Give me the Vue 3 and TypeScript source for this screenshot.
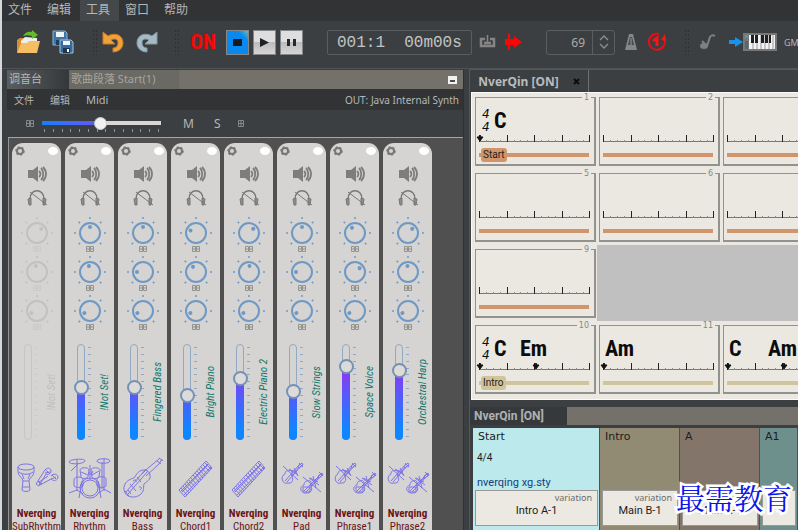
<script setup lang="ts">
import { ref } from 'vue'

interface Channel {
  name: string
  patch: string
  icon: string
  knobs: number[]
  level: number
  off?: boolean
}

interface Chord {
  name: string
  beat: number
}

interface Bar {
  num: number
  chords?: Chord[]
  meter?: boolean
  section?: string
  tone: string
  blank?: boolean
}

const menus = ['文件', '编辑', '工具', '窗口', '帮助']
const tempo = ref('69')
const master = ref(49)

const channels = ref<Channel[]>([
  { name: 'SubRhythm', patch: '!Not Set!', icon: 'djembe', knobs: [45, -10, -110], level: 0, off: true },
  { name: 'Rhythm', patch: '!Not Set!', icon: 'drums', knobs: [0, -10, -110], level: 56 },
  { name: 'Bass', patch: 'Fingered Bass', icon: 'bass', knobs: [0, -90, -110], level: 56 },
  { name: 'Chord1', patch: 'Bright Piano', icon: 'keys', knobs: [-65, -30, -110], level: 46 },
  { name: 'Chord2', patch: 'Electric Piano 2', icon: 'keys', knobs: [45, 5, -110], level: 67 },
  { name: 'Pad', patch: 'Slow Strings', icon: 'strings', knobs: [0, -90, -110], level: 51 },
  { name: 'Phrase1', patch: 'Space Voice', icon: 'strings', knobs: [-30, 50, -110], level: 82 },
  { name: 'Phrase2', patch: 'Orchestral Harp', icon: 'strings', knobs: [45, -5, -110], level: 76 },
])

const knobNames = ['Pan', 'Reverb', 'Chorus']
const knobTicks = [-135, -90, -45, 0, 45, 90, 135]

const icons: Record<string, string[]> = {
  djembe: [
    'M3 10c0-4 16-4 16 0s-16 4-16 0zM3 10v5c0 4 5 6 5 9l-1 9c2 2 6 2 8 0l-1-9c0-3 5-5 5-9v-5M4 15c4 3 10 3 14 0M7 17l2 5M15 17l-2 5M8 24h6M8 30h6',
    'M30 13c2-3 6-2 6 1s-3 4-5 3l-7 12-3-2 7-11zM36 19c2-3 7-2 7 1s-4 5-7 2l-11 6-1-3 9-6M30 16l5-1M36 22l5-2M31 13l4 4M37 18l4 4M23 24l4 3',
  ],
  drums: [
    'M1 5c0-3 17-4 16-1S2 8 1 5zM29 4c0-3 13-3 13 0s-13 3-13 0zM9 2v32M10 7L3 14M36 1v33M34 5v27M9 33l-8 3M9 33l6 4M36 32l-5 4M36 32l7 4',
    'M12 31a10 10 0 1 0 20 0a10 10 0 1 0-20 0zM14 31a8 8 0 1 0 16 0a8 8 0 1 0-16 0zM14 24L11 41M30 24l3 17M6 23c0-4 9-4 9 0v6c-2 2-7 2-9 0zM29 22c0-3 9-3 9 0v7c-2 2-7 2-9 0z',
    'M12 13c0-3 9-3 9 0l-1 7c-2 2-6 2-7 0zM23 13c0-3 9-3 9 0l-1 7c-2 2-6 2-7 0zM21 15l2 3 2-4M22 8v15M13 15l7 3M24 18l7-4',
  ],
  bass: [
    'M41 2l-3 5-13 12M39 1L26 12l-5 5M38 1l4 3M36 4l4 3M22 13c-6 1-7 6-9 8-4 1-11 4-10 12 1 8 12 9 17 4 4-4 2-8 3-10 3-3 7-4 6-9-1-4-3-5-7-5z',
    'M27 14L7 37M25 12L5 35M9 27l6 7M4 34l4 5M7 33l3 4M16 20l4 5M12 24c2-2 4-1 3 1M18 30c3-1 3 2 1 3',
  ],
  keys: [
    'M5 33L32 4l6 7L11 40zM7 34L34 7M10 38l27-28M8 35L33 9',
    'M7 31l6 7M9 29l6 7M11 27l6 7M13 25l6 7M15 23l6 7M17 21l6 7M19 18l6 7M21 16l6 7M23 14l6 7M25 12l6 7M27 10l6 7M29 8l6 6M31 6l6 6',
  ],
  strings: [
    'M5 17c-5 2-3 11 3 9 5 1 6-5 3-8 3-3-1-6-3-4-2-1-3 1-3 3zM5 24L20 7M7 25L22 8M3 9l15 14M10 13l7 2M14 11l4 8M19 6l4 4M9 12l9 6M12 19l7-9M18 9l4-3 1 2-4 3z',
    'M24 28c-6 2-3 9 3 8 5 0 6-5 3-8 3-3-1-6-3-4-2 0-3 2-3 4zM24 34l17-17M26 35l16-17M23 20l18 15M30 21l8 4M33 19l3 12M39 15l4 4M23 30h7v5h-7zM29 21l10 7M31 29l8-9M38 19l4-3 1 2-4 3z',
  ],
}

const bars: Bar[] = [
  { num: 1, meter: true, chords: [{ name: 'C', beat: 0 }], section: 'Start', tone: 'orange' },
  { num: 2, tone: 'orange' },
  { num: 3, tone: 'orange' },
  { num: 5, tone: 'orange' },
  { num: 6, tone: 'orange' },
  { num: 7, tone: 'orange' },
  { num: 9, tone: 'orange' },
  { num: 0, tone: 'orange', blank: true },
  { num: 10, meter: true, chords: [{ name: 'C', beat: 0 }, { name: 'Em', beat: 2 }], section: 'Intro', tone: 'sand' },
  { num: 11, chords: [{ name: 'Am', beat: 0 }], tone: 'sand' },
  { num: 12, chords: [{ name: 'C', beat: 0 }, { name: 'Am', beat: 2 }], tone: 'sand' },
]

const sections = [
  { name: 'Start', meter: '4/4', style: 'nverqing xg.sty', part: 'Intro A-1', tone: 'cyan' },
  { name: 'Intro', part: 'Main B-1', tone: 'olive' },
  { name: 'A', part: 'Main A-1', tone: 'brown' },
  { name: 'A1', part: '', tone: 'teal' },
]

const tickHeight = (n: number) => (n % 4 === 0 ? 7 : 2)
</script>

<template>
  <div class="app">
    <nav class="menubar">
      <button v-for="m in menus" :key="m" :class="{ active: m === '工具' }">{{ m }}</button>
    </nav>

    <header class="toolbar">
      <div class="group file">
        <button aria-label="Open">
          <svg width="25" height="26" viewBox="0 0 25 26">
            <path d="M1 23V11l3-2h6l2 2h9v12z" fill="#d98f2b" />
            <path d="M5 12l4-4 12 1v6H5z" fill="#eee" />
            <path d="M1 24l4-10h6l2-2h11l-3 12z" fill="#f7bd62" />
            <path d="M7 7c2-4 6-5 9-4V1l6 5-6 4V7c-3-1-6-1-9 0z" fill="#62bb2a" />
          </svg>
        </button>
        <button aria-label="Save all">
          <svg width="22" height="24" viewBox="0 0 22 24">
            <path d="M1 1h12l2 2v12H1z" fill="#3c76a8" stroke="#8db4d3" />
            <path d="M4 2h8v5H4z" fill="#eef4f8" /><path d="M4 10h8v5H4z" fill="#203f5e" />
            <path d="M8 10h11l2 2v11H8z" fill="#376a9b" stroke="#a2c2dc" />
            <path d="M11 11h7v4h-7z" fill="#eef4f8" /><path d="M11 18h7v5h-7z" fill="#1c3653" /><path d="M15 19h2v3h-2z" fill="#fff" />
          </svg>
        </button>
      </div>
      <i class="grip"></i>
      <div class="group history">
        <button aria-label="Undo">
          <svg width="22" height="22" viewBox="0 0 22 22"><path d="M1 1v12h12l-4-4c4-2 7-1 7 3 0 3-2 5-5 5v4c6 0 10-4 10-9C21 4 13 1 6 5z" fill="#f0a13a" stroke="#c97a25" /></svg>
        </button>
        <button aria-label="Redo">
          <svg width="22" height="22" viewBox="0 0 22 22"><path d="M21 1v12H9l4-4c-4-2-7-1-7 3 0 3 2 5 5 5v4C5 21 1 17 1 12 1 4 9 1 16 5z" fill="#a4bac4" stroke="#8399a4" /></svg>
        </button>
      </div>
      <i class="grip"></i>
      <button class="on">ON</button>
      <div class="group transport">
        <button class="stop" aria-label="Stop"><svg width="21" height="23" viewBox="0 0 21 23"><path d="M6 8h9v7H6z" fill="#151b20" /></svg></button>
        <button aria-label="Play"><svg width="21" height="23" viewBox="0 0 21 23"><path d="M6 7l9 4.500-9 4.500z" fill="#1c2126" /></svg></button>
        <button aria-label="Pause"><svg width="21" height="23" viewBox="0 0 21 23"><path d="M6 8h3v7H6zM12 8h3v7h-3z" fill="#25282b" /></svg></button>
      </div>
      <output class="position">001:1&nbsp; 00m00s</output>
      <div class="group loop">
        <button aria-label="Loop">
          <svg width="17" height="16" viewBox="0 0 17 16"><path d="M6 5H2v7h13V5h-4M5 9h7" fill="none" stroke="#858583" stroke-width="2.500" /><path d="M8.500 1v7" stroke="#858583" stroke-width="1.500" /></svg>
        </button>
        <button aria-label="Auto scroll">
          <svg width="18" height="20" viewBox="0 0 18 20"><path d="M0 7h3V2h2v5h4V4l8 6-8 6v-3H5v5H3v-5H0z" fill="#fb0505" /></svg>
        </button>
      </div>
      <div class="spinner">
        <input v-model="tempo" aria-label="Tempo">
        <button aria-label="Change tempo">
          <svg width="12" height="16" viewBox="0 0 12 16"><path d="M2 6l4-4 4 4M2 10l4 4 4-4" fill="none" stroke="#8c8f91" stroke-width="1.300" /></svg>
        </button>
      </div>
      <div class="group click">
        <button aria-label="Metronome">
          <svg width="14" height="17" viewBox="0 0 14 17"><path d="M5 0h4l4 16H1z" fill="#858686" /><path d="M6 3h2l2 8H4z" fill="#46494b" /><path d="M7 4v7" stroke="#999" /></svg>
        </button>
        <button aria-label="Precount">
          <svg width="20" height="20" viewBox="0 0 20 20"><path d="M12 2a8 8 0 1 0 5 4" fill="none" stroke="#e80e14" stroke-width="2" /><path d="M14 8l5 1-1-7z" fill="#f11" /><path d="M6 9l4-3v8" fill="none" stroke="#f11" stroke-width="3" /></svg>
        </button>
      </div>
      <i class="grip"></i>
      <div class="group output">
        <button aria-label="Notes">
          <svg width="17" height="18" viewBox="0 0 17 18"><ellipse cx="5" cy="13" rx="4" ry="3" fill="#7d7f80" /><path d="M8 13l3-9c1-2 3-2 5-1M3 8l4 4" fill="none" stroke="#7d7f80" stroke-width="2" /></svg>
        </button>
        <button aria-label="Keyboard">
          <svg width="48" height="20" viewBox="0 0 48 20">
            <path d="M0 8h6V5l8 5-8 5v-3H0z" fill="#1793ee" /><path d="M14 1h34v18H14z" fill="#777" />
            <path d="M20 3h26v14H20z" fill="#f3f3f3" /><path d="M16 3h3v3h-3z" fill="#3ba0c0" /><path d="M16 9h3v8h-3z" fill="#4e6b78" />
            <path d="M24 3v14M28 3v14M32 3v14M36 3v14M40 3v14M44 3v14" stroke="#999" />
            <path d="M22 3h3v8h-3zM26 3h3v8h-3zM32 3h3v8h-3zM36 3h3v8h-3zM40 3h2v8h-2z" fill="#1c2126" />
          </svg>
        </button>
        <span class="gm">GM</span>
      </div>
    </header>

    <main class="workspace">
      <section class="mixer">
        <div class="tabs">
          <button class="tab current">调音台</button>
          <button class="tab second">歌曲段落 Start(1)</button>
          <button class="min" aria-label="Minimize"><svg width="9" height="8" viewBox="0 0 9 8"><path d="M0 0h9v8H0z" fill="#f1f1f1" /><path d="M2 4h5v2H2z" fill="#4b4d4e" /></svg></button>
        </div>
        <div class="mixer-menu">
          <button>文件</button><button>编辑</button><button>Midi</button>
          <span class="out">OUT: Java Internal Synth</span>
        </div>
        <div class="master">
          <svg class="glyph" width="8" height="7" viewBox="0 0 8 7"><path d="M.5 .5h3v6h-3zM4.500 .5h3v6h-3zM0 3.500h8" fill="none" stroke="#858686" /></svg>
          <div class="master-slider">
            <input v-model="master" type="range" aria-label="Master volume">
            <div class="master-ticks"><i v-for="n in 14" :key="n"></i></div>
          </div>
          <button class="mute">M</button>
          <button class="solo">S</button>
          <svg class="glyph" width="6" height="7" viewBox="0 0 6 7"><path d="M.5 .5h5v6h-5zM3 0v7M0 3.500h6" fill="none" stroke="#858686" /></svg>
        </div>
        <div class="strips">
          <article v-for="c in channels" :key="c.name" class="strip" :class="{ off: c.off }">
            <div class="strip-top">
              <button :aria-label="c.name + ' settings'"><svg width="11" height="10" viewBox="0 0 11 10"><circle cx="5" cy="5" r="3" fill="none" stroke="#777" stroke-width="2" /><circle cx="5" cy="5" r="4" fill="none" stroke="#777" stroke-width="1.500" stroke-dasharray="2 2" /></svg></button>
              <i class="lamp"></i>
            </div>
            <button class="speaker" :aria-label="c.name + ' mute'">
              <svg width="20" height="16" viewBox="0 0 20 16"><path d="M1 4h5l5-4v16l-5-4H1z" fill="#7d7d7c" /><path d="M12 5c2 2 2 4 0 6M14 2c3 3 3 9 0 12M16 1c4 4 4 10 0 14" fill="none" stroke="#7d7d7c" stroke-width="1.800" /></svg>
            </button>
            <button class="phones" :aria-label="c.name + ' solo'">
              <svg width="20" height="16" viewBox="0 0 20 16"><path d="M3 9C3-2 17-2 17 9" fill="none" stroke="#777" stroke-width="1.400" /><path d="M1 9l3-1v7H2zM19 9l-3-1v7h2z" fill="#8d8d8c" stroke="#777" /><path d="M3 2l17 13" stroke="#777" /></svg>
            </button>
            <label v-for="(k, ki) in c.knobs" :key="ki" class="knob">
              <svg width="34" height="39" viewBox="0 0 34 39">
                <path v-for="t in knobTicks" :key="t" d="M17 1v2" :transform="`rotate(${t} 17 17)`" class="ray" />
                <circle cx="17" cy="17" r="10" class="dial" />
                <circle cx="17" cy="11" r="2" class="dot" :transform="`rotate(${k} 17 17)`" />
                <path d="M13.500 30.500h3v5h-3zM17.500 30.500h3v5h-3zM13 33h8" class="box" />
              </svg>
              <input type="range" min="-135" max="135" :value="k" :aria-label="`${c.name} ${knobNames[ki]}`">
            </label>
            <div class="fader-row">
              <div class="fader">
                <div class="fader-track"></div>
                <div class="fader-fill" :style="{ height: c.level + '%' }"></div>
                <input v-model="c.level" type="range" :disabled="c.off" :aria-label="c.name + ' volume'">
              </div>
              <div class="fader-ticks"><i v-for="n in 14" :key="n"></i></div>
              <span class="patch">{{ c.patch }}</span>
            </div>
            <svg class="instrument" width="44" height="42" viewBox="0 0 44 42"><path v-for="d in icons[c.icon]" :key="d" :d="d" /></svg>
            <strong>Nverqing</strong>
            <span class="chan-name">{{ c.name }}</span>
          </article>
        </div>
      </section>

      <div class="right">
        <section class="lead">
          <div class="lead-tabs">
            <button class="lead-tab">NverQin [ON]<svg width="7" height="7" viewBox="0 0 7 7"><path d="M1 1l5 5M6 1L1 6" stroke="#0c0c0c" stroke-width="2" /></svg></button>
          </div>
          <div class="sheet">
            <div v-for="b in bars" :key="b.num" :class="b.blank ? 'blank' : ['bar', b.tone]">
              <template v-if="!b.blank">
                <span class="num">{{ b.num }}</span>
                <div class="chords">
                  <span v-if="b.meter" class="meter"><i>4</i><i>4</i></span>
                  <b v-for="ch in b.chords" :key="ch.beat" :class="'beat' + ch.beat">{{ ch.name }}</b>
                </div>
                <svg class="ruler" width="112" height="8" viewBox="0 0 112 8">
                  <path d="M0 7.500h111" stroke="#777" />
                  <path v-for="n in 17" :key="n" :d="`M${Math.round((n - 1) * 6.9) + 0.5} 8v-${tickHeight(n - 1)}`" :stroke="(n - 1) % 4 ? '#8b8b88' : '#222'" />
                  <path v-for="ch in b.chords" :key="ch.beat" d="M-2 3h2l1-2 1 2h2L1 7z" :transform="`translate(${ch.beat * 28} 0)`" fill="#111" stroke="#111" />
                </svg>
                <div class="line"><span v-if="b.section">{{ b.section }}</span></div>
              </template>
            </div>
          </div>
        </section>

        <section class="structure">
          <div class="structure-tabs"><button>NverQin [ON]</button></div>
          <div class="parts">
            <article v-for="s in sections" :key="s.name" class="part" :class="s.tone">
              <h3>{{ s.name }}</h3>
              <span class="sig">{{ s.meter }}</span>
              <span class="style">{{ s.style }}</span>
              <div class="variation"><small v-if="s.part">variation</small><span>{{ s.part }}</span></div>
            </article>
          </div>
        </section>
      </div>
    </main>
    <div class="watermark">最需教育</div>
  </div>
</template>

<style>
body {
  margin: 0;
  overflow: hidden;
  background: #3c3f41;
}
</style>

<style scoped>
* {
  box-sizing: border-box;
}

button {
  border: 0;
  padding: 0;
  background: none;
  color: inherit;
  font: inherit;
  display: flex;
  align-items: center;
  justify-content: center;
  white-space: nowrap;
}

svg {
  display: block;
  overflow: visible;
}

.app {
  height: 100vh;
  display: flex;
  flex-direction: column;
  overflow: hidden;
  background: #3c3f41;
  border-left: 2px solid #d5d8d9;
  color: #b5b7b8;
  font-family: "Noto Sans", "Noto Sans CJK SC", sans-serif;
}

.menubar {
  display: flex;
  flex: none;
  height: 21px;
  background: #313335;
  font-size: 12px;
}

.menubar button {
  width: 39px;
  padding: 0 3px 3px 0;
}

.menubar button.active {
  background: #45484a;
}

.toolbar {
  display: flex;
  flex: none;
  align-items: center;
  height: 47px;
  padding: 0 0 5px 14px;
  overflow: hidden;
}

.toolbar > * {
  flex: none;
}

.group {
  display: flex;
  align-items: center;
}

.file {
  gap: 11px;
  margin-right: 18px;
}

.grip {
  width: 5px;
  height: 26px;
  background: radial-gradient(circle, #2e3133 1px, transparent 1px) 0 0 / 3px 4px;
}

.history {
  gap: 12px;
  margin: 0 16px 0 5px;
}

.on {
  width: 22px;
  margin: 0 12px 0 13px;
  color: #fa0606;
  font: bold 21px/24px "Roboto Condensed", "Liberation Sans Narrow", sans-serif;
}

.transport {
  gap: 4px;
  margin-right: 24px;
}

.transport button {
  width: 23px;
  height: 25px;
  border: 1px solid #85888a;
  background: linear-gradient(#dedede 50%, #bcbcbc 50%, #d6d6d6);
}

.transport .stop {
  background: linear-gradient(45deg, #0789f0 75%, #71b6aa);
}

.position {
  width: 145px;
  height: 25px;
  margin-right: 7px;
  padding-left: 9px;
  border: 1px solid #5b5e60;
  border-radius: 2px;
  color: #c3c4c5;
  font: 16px/24px "Liberation Mono", monospace;
  white-space: pre;
}

.loop {
  gap: 9px;
  margin-right: 23px;
}

.spinner {
  display: flex;
  width: 69px;
  height: 25px;
  margin-right: 9px;
  border: 1px solid #5c5f61;
  border-radius: 3px;
}

.spinner input {
  width: 46px;
  padding: 0 7px 0 0;
  border: 0;
  border-right: 1px solid #5c5f61;
  background: none;
  color: #a9abad;
  font: 12px "Noto Sans", sans-serif;
  text-align: right;
}

.spinner button {
  flex: 1;
}

.click {
  gap: 9px;
  margin-right: 17px;
}

.output {
  gap: 13px;
  margin-left: 10px;
}

.gm {
  margin-left: -6px;
  font-size: 9px;
}

.workspace {
  flex: 1;
  min-height: 0;
  display: grid;
  grid-template-columns: 457fr 329fr;
  gap: 5px;
  padding-left: 5px;
  border-top: 1px solid #505355;
}

.mixer {
  display: flex;
  flex-direction: column;
  min-width: 0;
  min-height: 0;
  margin-top: 1px;
  border-right: 1px solid #2e3032;
}

.tabs {
  display: flex;
  align-items: stretch;
  flex: none;
  height: 19px;
  background: #73716a;
  font-size: 11px;
}

.tab {
  padding: 0 0 3px 2px;
  justify-content: flex-start;
}

.tab.current {
  width: 62px;
  background: linear-gradient(90deg, #5a5e61, #35383a);
}

.tab.second {
  width: 110px;
  border-right: 1px solid #66655f;
  background: #6a6963;
  color: #a6a69f;
}

.min {
  margin: 0 6px 0 auto;
}

.mixer-menu {
  display: flex;
  align-items: center;
  flex: none;
  gap: 16px;
  height: 21px;
  padding: 0 4px 0 7px;
  background: #313335;
  font-size: 10px;
}

.mixer-menu button:last-of-type {
  font-size: 11px;
}

.out {
  margin-left: auto;
}

.master {
  display: flex;
  align-items: center;
  flex: none;
  height: 27px;
  padding-left: 19px;
  font-size: 12px;
}

.master-slider {
  width: 119px;
  margin: 2px 22px 0 8px;
}

.master-slider input {
  display: block;
  width: 100%;
  height: 12px;
  margin: 0;
  appearance: none;
  background: linear-gradient(90deg, #1680ff, #6b53f3 49%, #d9d7d4 49%) center / 100% 4px no-repeat;
}

.master-slider input::-webkit-slider-thumb {
  appearance: none;
  width: 13px;
  height: 13px;
  border-radius: 50%;
  background: #f1f1f1;
  border: 1px solid #c9c9c9;
}

.master-ticks {
  display: flex;
  justify-content: space-between;
  padding: 0 2px;
}

.master-ticks i {
  width: 1px;
  height: 3px;
  background: #919496;
}

.mute {
  margin-right: 20px;
}

.solo {
  margin-right: 18px;
}

.strips {
  display: flex;
  flex: 1;
  gap: 4px;
  min-height: 0;
  margin-left: 1px;
  padding: 5px 0 0 3px;
  overflow: hidden;
  border-top: 1px solid #a5a5a4;
  border-left: 1px solid #949494;
  background: #505050;
}

.strip {
  display: flex;
  flex-direction: column;
  align-items: center;
  flex: none;
  width: 49px;
  height: 400px;
  overflow: hidden;
  border-radius: 11px 11px 0 0;
  background: #d5d4d2;
}

.strip-top {
  display: flex;
  flex: none;
  align-items: center;
  justify-content: space-between;
  width: 100%;
  height: 15px;
  padding: 0 3px;
}

.lamp {
  width: 10px;
  height: 8px;
  border-radius: 50%;
  background: #fff;
}

.speaker,
.phones {
  flex: none;
  height: 16px;
  margin-top: 8px;
}

.phones {
  margin-bottom: 10px;
}

.knob {
  position: relative;
  flex: none;
  height: 39px;
  color: #6f99c5;
}

.knob input {
  position: absolute;
  inset: 0;
  width: 34px;
  height: 34px;
  margin: 0;
  opacity: 0;
}

.dial {
  fill: none;
  stroke: currentColor;
  stroke-width: 2;
}

.ray {
  stroke: currentColor;
  stroke-width: 1.5;
}

.dot {
  fill: currentColor;
}

.box {
  fill: none;
  stroke: #92928f;
}

.off .knob {
  color: #c2c1bf;
}

.off .box {
  stroke: #cbcac8;
}

.fader-row {
  display: flex;
  flex: none;
  align-items: center;
  width: 100%;
  height: 96px;
  margin-top: 11px;
  padding-left: 9px;
}

.fader {
  position: relative;
  width: 14px;
  height: 96px;
}

.fader-track,
.fader-fill {
  position: absolute;
  bottom: 0;
  left: 3px;
  width: 8px;
  border-radius: 4px;
}

.fader-track {
  height: 100%;
  border: 1px solid #91a9c4;
}

.off .fader-track {
  border-color: #c6c5c3;
}

.fader-fill {
  background: linear-gradient(to top, #0e86ff 10px, #9631f5 75px);
}

.fader input {
  position: absolute;
  inset: 0;
  width: 14px;
  height: 96px;
  margin: 0;
  appearance: none;
  background: none;
  writing-mode: vertical-lr;
  direction: rtl;
}

.fader input::-webkit-slider-thumb {
  appearance: none;
  width: 15px;
  height: 15px;
  border: 2px solid #7692b3;
  border-radius: 50%;
  background: #dcdbd9;
}

.off .fader input {
  visibility: hidden;
}

.fader-ticks {
  display: flex;
  flex-direction: column;
  justify-content: space-between;
  height: 90px;
}

.fader-ticks i {
  width: 3px;
  height: 1px;
  background: #8da8c8;
}

.off .fader-ticks i {
  background: #cccbc9;
}

.patch {
  margin-left: 7px;
  color: #0f776c;
  font: italic 11px/14px "Roboto Condensed", "Liberation Sans Narrow", sans-serif;
  white-space: nowrap;
  writing-mode: vertical-rl;
  transform: rotate(180deg);
}

.off .patch {
  color: #bfbebc;
}

.instrument {
  flex: none;
  margin: 17px 0 8px;
  fill: none;
  stroke: #7d75e4;
  stroke-width: 1;
}

.strip strong,
.chan-name {
  flex: none;
  color: #6c1515;
  font: bold 11px/13px "Roboto Condensed", "Liberation Sans Narrow", sans-serif;
}

.strip .chan-name {
  font-weight: normal;
}

.right {
  display: flex;
  flex-direction: column;
  min-width: 0;
  min-height: 0;
  border-left: 1px solid #55585a;
}

.lead {
  flex: none;
}

.lead-tabs {
  display: flex;
  height: 23px;
  border-top: 1px solid #55585a;
}

.lead-tab {
  width: 119px;
  gap: 14px;
  border-right: 1px solid #6d7072;
  font: bold 12px "Noto Sans", sans-serif;
  color: #b9bcbe;
}

.sheet {
  display: grid;
  grid-template-columns: repeat(3, 121px);
  grid-auto-rows: 69px;
  gap: 7px 3px;
  margin-left: 1px;
  padding: 4px 0 5px 3px;
  overflow: hidden;
  border: 1px solid #fafafa;
  border-right: 0;
  background: #ebe8e1;
}

.bar {
  position: relative;
  display: flex;
  flex-direction: column;
  padding: 0 4px 0 3px;
  border: 1px solid #92928f;
  border-right-width: 2px;
  border-bottom-width: 2px;
}

.blank {
  grid-column: span 2;
  margin: -4px 0 -3px -2px;
  background: #c0c0c0;
}

.num {
  position: absolute;
  top: -5px;
  right: 3px;
  padding: 0 2px;
  background: #ebe8e1;
  color: #858985;
  font: 8px/10px "DejaVu Sans", sans-serif;
}

.chords {
  position: relative;
  display: flex;
  flex: none;
  height: 36px;
  color: #0c0c0c;
  font: 22px/26px "Roboto Condensed", "Liberation Sans Narrow", sans-serif;
}

.chords b {
  position: absolute;
  top: 10px;
  left: 2px;
}

.chords .meter ~ .beat0 {
  left: 15px;
}

.chords .beat2 {
  left: 41px;
}

.meter {
  display: flex;
  flex-direction: column;
  padding: 10px 0 0 3px;
  font: 12px/13px "DejaVu Sans", sans-serif;
}

.ruler {
  flex: none;
}

.line {
  display: flex;
  align-items: center;
  height: 4px;
  margin-top: 11px;
  margin-right: 1px;
  background: #d0956a;
}

.line span {
  margin-left: 2px;
  padding: 0 2px;
  border-radius: 3px;
  background: #d0956a;
  color: #26201b;
  font: 10px/14px Roboto, sans-serif;
}

.sand .line,
.sand .line span {
  background: #d0c49b;
}

.structure {
  display: flex;
  flex: 1;
  flex-direction: column;
  min-height: 0;
  margin-top: 7px;
}

.structure-tabs {
  display: flex;
  flex: none;
  height: 18px;
  margin-bottom: 3px;
  background: #73716a;
}

.structure-tabs button {
  width: 97px;
  padding-left: 4px;
  justify-content: flex-start;
  background: #36393b;
  color: #afb1b3;
  font: bold 12px Roboto, sans-serif;
}

.parts {
  display: grid;
  grid-template-columns: 127px 80px 80px 1fr;
  flex: 1;
  min-height: 0;
  margin-left: 3px;
  overflow: hidden;
}

.part {
  display: flex;
  flex-direction: column;
  padding: 2px 1px 4px 2px;
  border-right: 1px solid #4d5254;
  color: #1d1d1d;
}

.part h3 {
  margin: 0 0 7px 3px;
  font: 11px/14px "DejaVu Sans", sans-serif;
}

.sig,
.style {
  height: 14px;
  margin-left: 2px;
  font: 10px/14px Roboto, sans-serif;
}

.style {
  margin-top: 11px;
  color: #173e79;
  font-size: 11px;
}

.variation {
  display: flex;
  flex-direction: column;
  align-items: center;
  height: 36px;
  padding: 1px 5px 0;
  border: 1px solid #999;
  background: #ece9e3;
  font: 11px/13px Roboto, sans-serif;
}

.variation small {
  align-self: flex-end;
  color: #6b6b6b;
  font: 9px/12px "Noto Sans", sans-serif;
}

.cyan {
  background: #bbe9ec;
}

.olive {
  background: #918b74;
}

.brown {
  background: #84756b;
}

.teal {
  background: #6e908c;
}

.watermark {
  position: absolute;
  right: 6px;
  bottom: 12px;
  color: #0b14e8;
  font: 29px/40px "Noto Serif CJK SC", "Noto Sans CJK SC", serif;
  -webkit-text-stroke: 5px #fff;
  paint-order: stroke fill;
}
</style>
